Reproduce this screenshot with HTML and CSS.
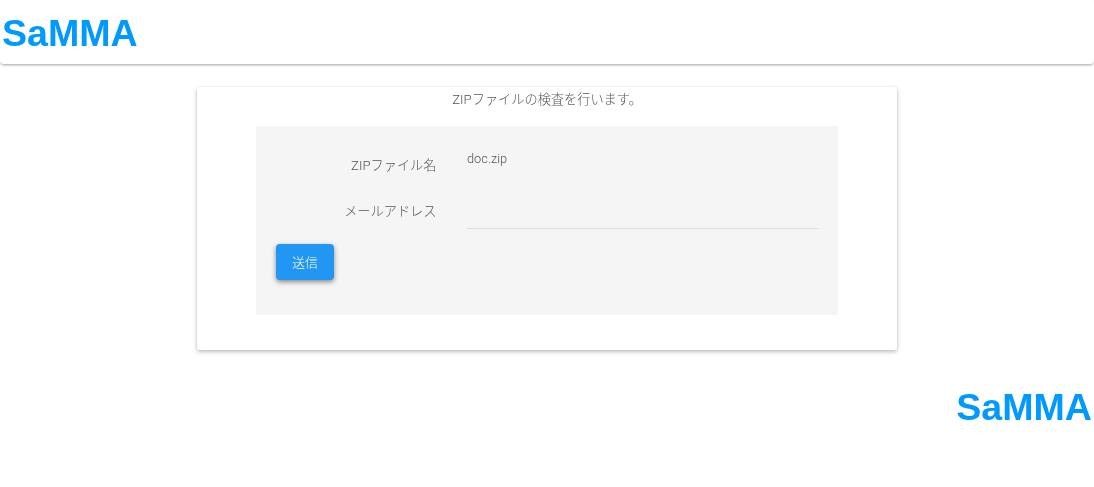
FILE: index.html
```html
<!DOCTYPE html>
<html lang="ja">
<head>
<meta charset="utf-8">
<title>SaMMA</title>
<link rel="stylesheet" href="styles.css">
</head>
<body>
<header class="toolbar"><span class="logo">SaMMA</span></header>
<main class="card">
  <p class="lead">ZIPファイルの検査を行います。</p>
  <form class="panel">
    <div class="row row-file">
      <div class="label">ZIPファイル名</div>
      <div class="value">doc.zip</div>
    </div>
    <div class="row row-mail">
      <label class="label" for="mail">メールアドレス</label>
      <div class="value"><input class="input" id="mail" type="text"></div>
    </div>
    <button class="btn" type="button">送信</button>
  </form>
</main>
<footer class="footer"><span class="logo">SaMMA</span></footer>
</body>
</html>
```
FILE: styles.css
```css
* { box-sizing: border-box; }
html, body { margin: 0; padding: 0; }
body {
  background: #fff;
  color: #555;
  font-family: Roboto, "Noto Sans CJK JP", sans-serif;
  font-size: 13.2px;
  font-weight: 300;
  line-height: 20px;
}
.toolbar {
  height: 64px;
  padding: 2px 0 0 2px;
  display: flex;
  align-items: center;
  background: #fff;
  border-radius: 4px;
  box-shadow: 0 2px 3px -1px rgba(0,0,0,.3), 0 1px 3px rgba(0,0,0,.1);
  will-change: transform;
}
.logo {
  font-family: "Liberation Sans", Arial, sans-serif;
  font-weight: 700;
  font-size: 37.6px;
  line-height: 44px;
  color: #09f;
}
.card {
  width: 700px;
  height: 263px;
  margin: 23px 0 0 197px;
  padding-top: 3px;
  background: #fff;
  border-radius: 2px;
  box-shadow: 0 2px 4px rgba(0,0,0,.24), 0 0 3px rgba(0,0,0,.1);
  will-change: transform;
}
.lead { margin: 0 0 16px; text-align: center; }
.panel {
  width: 582px;
  height: 189px;
  margin-left: 59px;
  padding: 0 20px;
  background: #f5f5f5;
}
.row { display: flex; }
.label { width: 160.5px; text-align: right; }
.value { width: 351px; margin-left: 30.5px; font-size: 12.8px; }
.row-file { padding-top: 23px; height: 71px; }
.row-file .label { padding-top: 7px; }
.row-mail { height: 47px; padding-top: 5px; }
.row-mail .value { margin-top: -1px; }
.input {
  display: block;
  width: 100%;
  height: 28px;
  border: 0;
  border-bottom: 1px solid #ddd;
  background: transparent;
  outline: 0;
}
.btn {
  display: block;
  width: 58px;
  height: 36px;
  padding: 1px 0 0;
  border: 0;
  border-radius: 4px;
  background: #2196f3;
  color: #fff;
  font: inherit;
  font-size: 13px;
  box-shadow: 0 2px 5px rgba(0,0,0,.45);
}
.footer {
  display: flex;
  justify-content: flex-end;
  margin-top: 35px;
  padding-right: 2px;
  will-change: transform;
}
```
